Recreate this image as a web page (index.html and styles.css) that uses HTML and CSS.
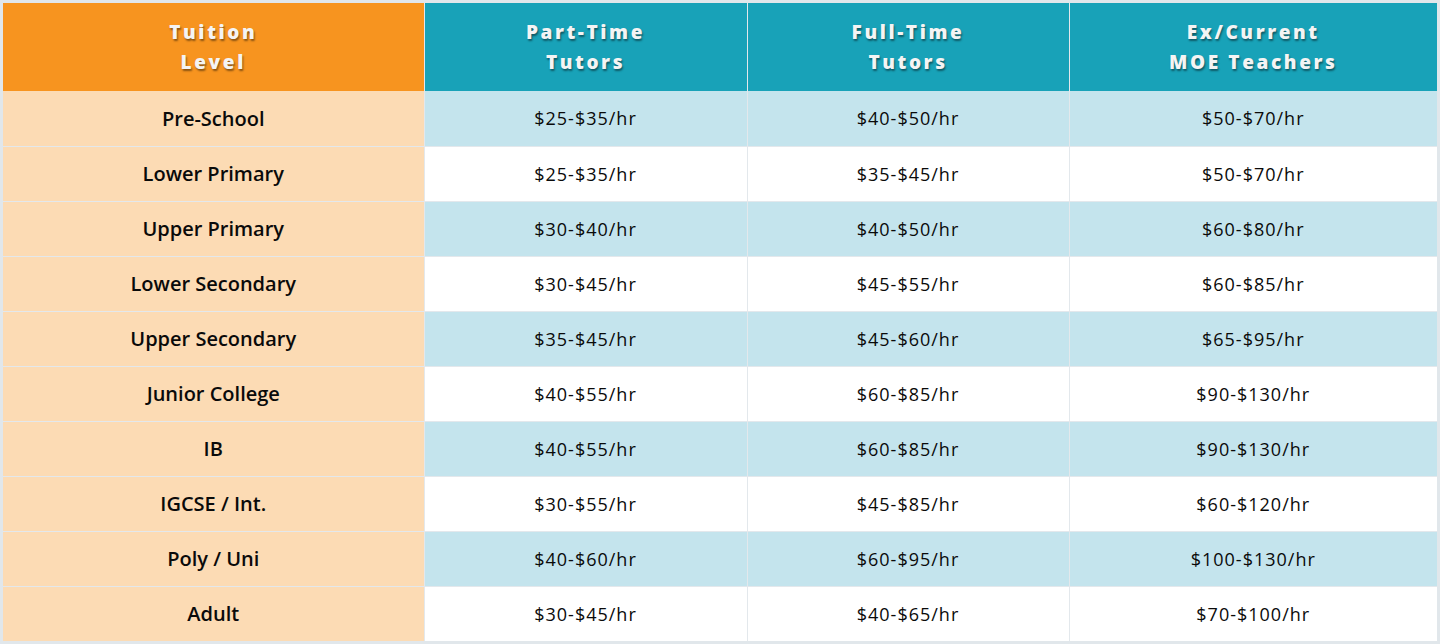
FILE: index.html
```html
<!DOCTYPE html>
<html>
<head>
<meta charset="utf-8">
<link rel="stylesheet" href="styles.css">
</head>
<body>
<div class="frame">
<table class="rates">
  <colgroup>
    <col class="c1"><col class="c2"><col class="c3"><col class="c4">
  </colgroup>
  <thead>
    <tr>
      <th class="lvl-h">Tuition<br>Level</th>
      <th>Part-Time<br>Tutors</th>
      <th>Full-Time<br>Tutors</th>
      <th>Ex/Current<br>MOE Teachers</th>
    </tr>
  </thead>
  <tbody>
    <tr class="odd"><td class="lvl">Pre-School</td><td>$25-$35/hr</td><td>$40-$50/hr</td><td>$50-$70/hr</td></tr>
    <tr><td class="lvl">Lower Primary</td><td>$25-$35/hr</td><td>$35-$45/hr</td><td>$50-$70/hr</td></tr>
    <tr class="odd"><td class="lvl">Upper Primary</td><td>$30-$40/hr</td><td>$40-$50/hr</td><td>$60-$80/hr</td></tr>
    <tr><td class="lvl">Lower Secondary</td><td>$30-$45/hr</td><td>$45-$55/hr</td><td>$60-$85/hr</td></tr>
    <tr class="odd"><td class="lvl">Upper Secondary</td><td>$35-$45/hr</td><td>$45-$60/hr</td><td>$65-$95/hr</td></tr>
    <tr><td class="lvl">Junior College</td><td>$40-$55/hr</td><td>$60-$85/hr</td><td>$90-$130/hr</td></tr>
    <tr class="odd"><td class="lvl">IB</td><td>$40-$55/hr</td><td>$60-$85/hr</td><td>$90-$130/hr</td></tr>
    <tr><td class="lvl">IGCSE / Int.</td><td>$30-$55/hr</td><td>$45-$85/hr</td><td>$60-$120/hr</td></tr>
    <tr class="odd"><td class="lvl">Poly / Uni</td><td>$40-$60/hr</td><td>$60-$95/hr</td><td>$100-$130/hr</td></tr>
    <tr><td class="lvl">Adult</td><td>$30-$45/hr</td><td>$40-$65/hr</td><td>$70-$100/hr</td></tr>
  </tbody>
</table>
</div>
</body>
</html>
```
FILE: styles.css
```css
html, body {
  margin: 0;
  padding: 0;
  background: #ffffff;
}
.frame {
  width: 1440px;
  height: 644px;
  box-sizing: border-box;
  border: 3px solid #e1e7eb;
  overflow: hidden;
}
.rates {
  width: 1434px;
  border-collapse: collapse;
  table-layout: fixed;
}
.c1 { width: 421px; }
.c2 { width: 323px; }
.c3 { width: 322px; }
.c4 { width: 368px; }
.rates th {
  height: 88px;
  padding: 0;
  background: #18a2b8;
  color: #f4f4f4;
  font-family: "Open Sans", sans-serif;
  font-weight: 800;
  font-size: 19px;
  line-height: 30px;
  letter-spacing: 2.6px;
  text-shadow: 1px 2px 2px rgba(0,0,0,0.45);
  border-left: 1px solid #e3e8ec;
  box-sizing: border-box;
}
.rates th.lvl-h {
  background: #f7941f;
  border-left: none;
}
.rates td {
  height: 55px;
  padding: 0;
  text-align: center;
  font-family: "Open Sans", sans-serif;
  font-size: 18px;
  letter-spacing: 1px;
  color: #0a0a0a;
  background: #ffffff;
  border-left: 1px solid #e3e8ec;
  border-top: 1px solid #e3e8ec;
  box-sizing: border-box;
}
.rates tr.odd td { background: #c4e4ed; }
.rates td.lvl,
.rates tr.odd td.lvl {
  background: #fcdbb4;
  border-left: none;
  font-family: "Open Sans", sans-serif;
  font-weight: 600;
  font-size: 20px;
  letter-spacing: 0;
  color: #0a0a0a;
}
.rates tbody tr:first-child td { border-top: none; }
```
